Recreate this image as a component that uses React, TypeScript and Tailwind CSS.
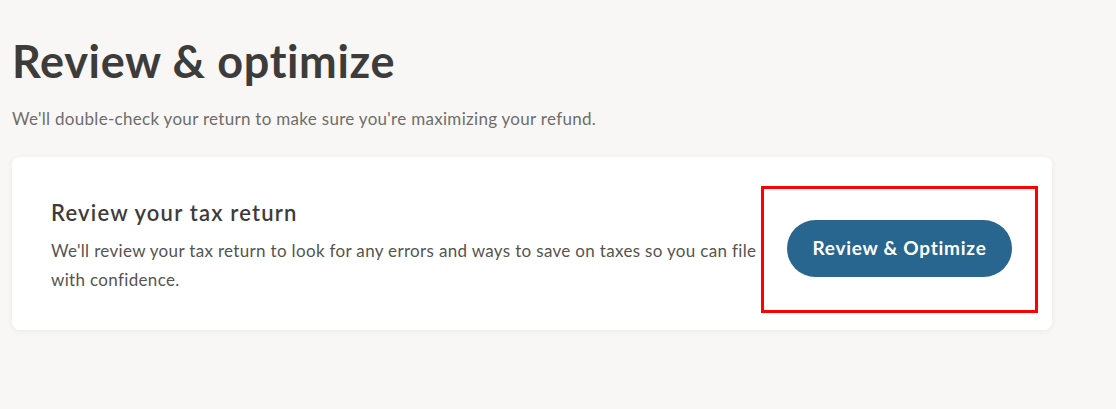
export default function App() {
  return (
    <div className="min-h-[409px] w-full bg-[#f8f7f6] px-3 pt-[31px] text-[#3d3c3a] [font-family:Lato,'Open_Sans',sans-serif]">
      <h1 className="text-[45px] font-bold leading-[60px] tracking-[0.65px]">Review &amp; optimize</h1>
      <p className="mt-[16px] text-[17px] leading-6 tracking-[0.3px] text-[#6e6d6a]">
        We'll double-check your return to make sure you're maximizing your refund.
      </p>

      <div className="mt-[26px] flex w-[1040px] items-center gap-6 rounded-lg bg-white pb-[36px] pl-[39px] pr-[40px] pt-[42px] shadow-[0_1px_6px_rgba(0,0,0,0.06)]">
        <div className="flex-1">
          <h2 className="text-[22px] font-semibold leading-7 tracking-[1.2px] text-[#3d3c3a]">Review your tax return</h2>
          <p className="mt-[9px] text-[17px] leading-[29px] tracking-[0.33px] text-[#55544f]">
            We'll review your tax return to look for any errors and ways to save on taxes so you can file with
            confidence.
          </p>
        </div>
        <div className="relative mt-[3px] shrink-0">
          <button className="h-[57px] w-[225px] rounded-full bg-[#28658f] text-[19px] font-bold tracking-[0.75px] text-white">
            Review &amp; Optimize
          </button>
          <div className="pointer-events-none absolute -bottom-[36px] -left-[26px] -right-[26px] -top-[34px] border-[3px] border-[#ff0000]" />
        </div>
      </div>
    </div>
  )
}
